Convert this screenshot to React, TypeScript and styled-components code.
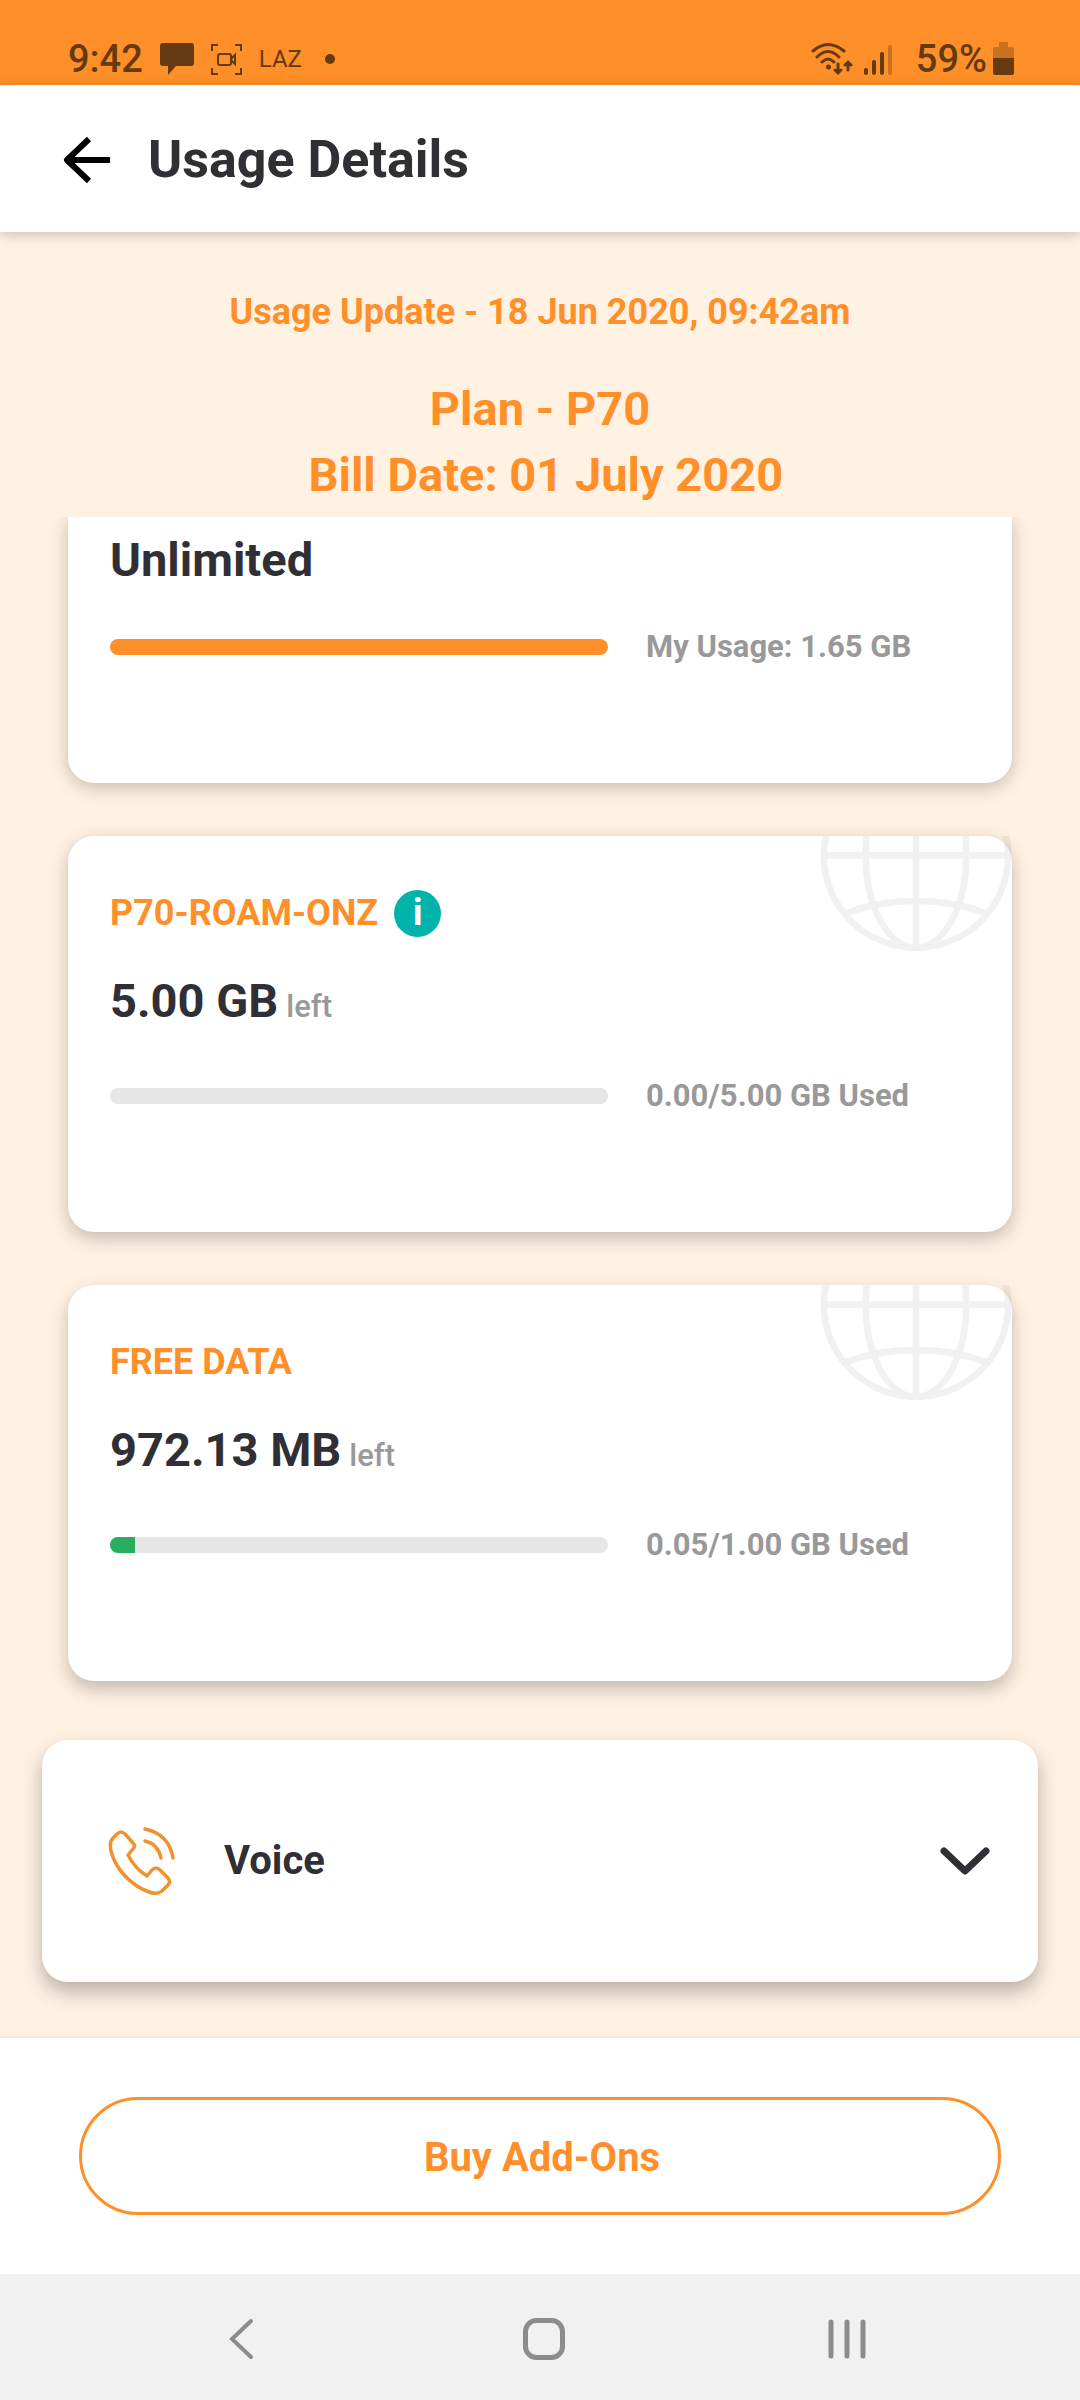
import React from "react";
import styled, { createGlobalStyle } from "styled-components";

const color = {
  orange: "#ff8f28",
  cream: "#fff2e3",
  ink: "#302f35",
  grey: "#999999",
  track: "#e6e6e6",
  teal: "#00b4ab",
  green: "#27ae60",
  status: "#663a10",
};

const GlobalStyle = createGlobalStyle`
  * { box-sizing: border-box; }
  body { margin: 0; background: ${color.cream}; }
  button { font: inherit; color: inherit; border: 0; padding: 0; background: none; cursor: pointer; }
  h1, h2, p { margin: 0; font: inherit; }
  svg { display: block; flex: none; }
`;

const Page = styled.div`
  display: flex;
  flex-direction: column;
  min-height: 100vh;
  background: ${color.cream};
  color: ${color.ink};
  font-family: Roboto, "Liberation Sans", sans-serif;
  font-weight: 700;
`;

/* ---------- status bar ---------- */

const StatusBar = styled.div`
  display: flex;
  justify-content: space-between;
  height: 85px;
  padding: 35px 66px 2px 68px;
  background: ${color.orange};
  color: ${color.status};
`;

const StatusGroup = styled.div<{ $gap: number }>`
  display: flex;
  align-items: center;
  gap: ${(p) => p.$gap}px;
`;

const StatusText = styled.span`
  font-size: 38px;
  line-height: 48px;
  font-weight: 500;
`;

const CarrierTag = styled.span`
  font-size: 24px;
  line-height: 48px;
  font-weight: 400;
`;

const Dot = styled.span`
  width: 10px;
  height: 10px;
  margin-left: 6px;
  border-radius: 50%;
  background: currentColor;
`;

/* ---------- header ---------- */

const Header = styled.header`
  position: relative;
  z-index: 2;
  display: flex;
  align-items: center;
  gap: 37px;
  height: 147px;
  padding: 2px 62px 0;
  background: #fff;
  box-shadow: 0 3px 12px rgba(0, 0, 0, 0.2);
`;

const Title = styled.h1`
  font-size: 52px;
  line-height: 60px;
  font-weight: 700;
`;

/* ---------- summary ---------- */

const Summary = styled.section`
  display: flex;
  flex-direction: column;
  gap: 40px;
  padding: 56px 40px 9px;
  color: ${color.orange};
  text-align: center;
`;

const Updated = styled.p`
  font-size: 36px;
  line-height: 48px;
`;

const Plan = styled.p`
  font-size: 47px;
  line-height: 66px;
`;

/* ---------- usage cards ---------- */

const Scroller = styled.main`
  flex: 1;
  display: flex;
  flex-direction: column;
  gap: 59px;
  padding: 0 42px 56px;
  overflow: hidden;
`;

const CardList = styled.div`
  display: flex;
  flex-direction: column;
  gap: 53px;
  padding: 0 26px;
`;

const Card = styled.section<{ $depth: number; $cut?: boolean }>`
  position: relative;
  display: flex;
  flex-direction: column;
  padding: ${(p) => (p.$cut ? "13px" : "53px")} 0 116px 42px;
  border-radius: ${(p) => (p.$cut ? "0 0 26px 26px" : "26px")};
  background: #fff;
  box-shadow: 0 ${(p) => p.$depth}px 18px rgba(0, 0, 0, 0.24);
`;

const CardLabel = styled.h2`
  display: flex;
  align-items: center;
  gap: 16px;
  height: 48px;
  margin-bottom: 34px;
  color: ${color.orange};
  font-size: 36px;
  line-height: 48px;
`;

const InfoButton = styled.button`
  width: 47px;
  height: 47px;
  border-radius: 50%;
  background: ${color.teal};
  color: #fff;
  line-height: 47px;
`;

const Amount = styled.p<{ $cut?: boolean }>`
  height: 60px;
  margin-bottom: ${(p) => (p.$cut ? 37 : 45)}px;
  font-size: 47px;
  line-height: 60px;
`;

const Left = styled.span`
  margin-left: 8px;
  color: ${color.grey};
  font-size: 31px;
  line-height: 40px;
  font-weight: 500;
`;

const Meter = styled.div`
  display: grid;
  grid-template-columns: 498fr 366fr;
  gap: 38px;
  align-items: center;
  color: ${color.grey};
  font-size: 31px;
  line-height: 40px;
  white-space: nowrap;
`;

const Track = styled.div`
  height: 16px;
  border-radius: 8px;
  background: ${color.track};
  overflow: hidden;
`;

const Fill = styled.div<{ $tone: string }>`
  height: 100%;
  background: ${(p) => p.$tone};
`;

const GlobeClip = styled.div`
  position: absolute;
  top: 0;
  right: 0;
  width: 192px;
  height: 116px;
  overflow: hidden;
`;

const VoiceCard = styled.button`
  display: flex;
  align-items: center;
  height: 242px;
  padding: 0 48px 0 66px;
  border-radius: 26px;
  background: #fff;
  box-shadow: 0 10px 20px rgba(0, 0, 0, 0.28);
  font-size: 40px;
  line-height: 50px;
`;

const VoiceLabel = styled.span`
  flex: 1;
  margin-left: 48px;
  text-align: left;
`;

/* ---------- bottom ---------- */

const Footer = styled.footer`
  position: relative;
  display: flex;
  padding: 59px 79px;
  background: #fff;
  box-shadow: 0 0 4px rgba(0, 0, 0, 0.1);
`;

const BuyButton = styled.button`
  flex: 1;
  height: 118px;
  padding: 4px 0 0 4px;
  border: 3px solid ${color.orange};
  border-radius: 59px;
  color: ${color.orange};
  font-size: 40px;
  line-height: 50px;
`;

const NavBar = styled.nav`
  position: relative;
  display: grid;
  grid-template-columns: repeat(3, 1fr);
  height: 126px;
  padding: 4px 82px 0 90px;
  background: #f1f1f1;
`;

const NavButton = styled.button`
  display: flex;
  align-items: center;
  justify-content: center;
`;

/* ---------- drawings ---------- */

const Globe = () => (
  <svg width="192" height="116" viewBox="0 0 192 116" fill="none" stroke="#000" strokeWidth="6.5" opacity="0.05">
    <circle cx="96" cy="19.5" r="92.2" />
    <ellipse cx="96" cy="19.5" rx="50.3" ry="92.2" />
    <path d="M96 0V112M4 19.500H188M27 77C68 61 124 61 165 77" />
  </svg>
);

const usage = [
  { amount: "Unlimited", used: "My Usage: 1.65 GB", percent: 100, tone: color.orange },
  { label: "P70-ROAM-ONZ", info: true, amount: "5.00 GB", used: "0.00/5.00 GB Used", percent: 0, tone: color.green },
  { label: "FREE DATA", amount: "972.13 MB", used: "0.05/1.00 GB Used", percent: 5, tone: color.green },
];

export default function App() {
  return (
    <Page>
      <GlobalStyle />
      <StatusBar>
        <StatusGroup $gap={17}>
          <StatusText>9:42</StatusText>
          <svg width="34" height="34" viewBox="0 0 34 34" fill="currentColor">
            <path d="M3 1H31Q34 1 34 4V21Q34 24 31 24H16L8 33V24H3Q0 24 0 21V4Q0 1 3 1Z" />
          </svg>
          <svg width="31" height="31" viewBox="0 0 31 31" fill="none" stroke="currentColor" strokeWidth="2">
            <path d="M1 7V1H7M24 1H30V7M30 24V30H24M7 30H1V24" />
            <rect x="7" y="10" width="13" height="11" rx="2" />
            <path d="M20 15L24 11V20L20 16Z" />
          </svg>
          <CarrierTag>LAZ</CarrierTag>
          <Dot />
        </StatusGroup>
        <StatusGroup $gap={6}>
          <svg width="42" height="34" viewBox="0 0 42 34" fill="none" stroke="currentColor" strokeWidth="3" strokeLinecap="round">
            <path d="M2 9Q17 -4 33 9M6 15Q17 4 28 15M11 20Q17 14 23 20" />
            <circle cx="17.500" cy="25" r="2.500" fill="currentColor" stroke="none" />
            <path d="M27 22V31M24 28L27 31L30 28M37 28V20M34 23L37 20L40 23" />
          </svg>
          <svg width="51" height="34" viewBox="0 0 51 34" fill="none" stroke="currentColor" strokeWidth="4" strokeLinecap="round">
            <path d="M7 28V31M15 20V31M23 12V31" />
            <path d="M31 5V31" opacity="0.35" />
          </svg>
          <StatusText>59%</StatusText>
          <svg width="21" height="34" viewBox="0 0 21 34" fill="currentColor">
            <path d="M6 0H15V5H19Q21 5 21 7V16H0V7Q0 5 2 5H6Z" opacity="0.35" />
            <path d="M0 16H21V31Q21 33 19 33H2Q0 33 0 31Z" />
          </svg>
        </StatusGroup>
      </StatusBar>

      <Header>
        <button aria-label="Back">
          <svg width="49" height="48" viewBox="0 0 49 48" fill="none" stroke="#000" strokeWidth="6" strokeLinejoin="round">
            <path d="M27 3L5 24L27 45M5 24H48" />
          </svg>
        </button>
        <Title>Usage Details</Title>
      </Header>

      <Summary>
        <Updated>Usage Update - 18 Jun 2020, 09:42am</Updated>
        <Plan>
          Plan - P70
          <br />
          {"\u00a0"}Bill Date: 01 July 2020
        </Plan>
      </Summary>

      <Scroller>
        <CardList>
          {usage.map((item, i) => (
            <Card key={item.amount} $depth={4 + i * 2} $cut={!item.label}>
              {item.label && (
                <>
                  <GlobeClip>
                    <Globe />
                  </GlobeClip>
                  <CardLabel>
                    {item.label}
                    {item.info && <InfoButton aria-label="Plan information">i</InfoButton>}
                  </CardLabel>
                </>
              )}
              <Amount $cut={!item.label}>
                {item.amount}
                {item.label && <Left>left</Left>}
              </Amount>
              <Meter>
                <Track role="progressbar" aria-label={item.used} aria-valuenow={item.percent}>
                  <Fill $tone={item.tone} style={{ width: `${item.percent}%` }} />
                </Track>
                <span>{item.used}</span>
              </Meter>
            </Card>
          ))}
        </CardList>

        <VoiceCard aria-expanded="false">
          <svg width="68" height="68" viewBox="0 0 68 68" fill="none" stroke="#f0932f" strokeWidth="3.500" strokeLinecap="round" strokeLinejoin="round">
            <path d="M9 7Q13 3 17 7L25 16Q28 19 25 22L20 28C24 36 31 44 39 49L44 43Q48 39 52 43L60 51Q63 55 60 58L54 64Q49 68 41 65C22 58 7 41 3 24Q1 15 5 11Z" />
            <path d="M37 2Q61 7 65 31M37 14Q50 17 53 31" />
          </svg>
          <VoiceLabel>Voice</VoiceLabel>
          <svg width="50" height="28" viewBox="0 0 50 28" fill="none" stroke={color.ink} strokeWidth="7" strokeLinecap="round" strokeLinejoin="round">
            <path d="M4 4L25 24L46 4" />
          </svg>
        </VoiceCard>
      </Scroller>

      <Footer>
        <BuyButton>Buy Add-Ons</BuyButton>
      </Footer>

      <NavBar>
        <NavButton aria-label="Back">
          <svg width="26" height="42" viewBox="0 0 26 42" fill="none" stroke="#8c8c8c" strokeWidth="4" strokeLinecap="round">
            <path d="M23 3L4 21L23 39" />
          </svg>
        </NavButton>
        <NavButton aria-label="Home">
          <svg width="42" height="42" viewBox="0 0 42 42" fill="none" stroke="#8c8c8c" strokeWidth="5">
            <rect x="2.500" y="2.500" width="37" height="37" rx="11" />
          </svg>
        </NavButton>
        <NavButton aria-label="Recent apps">
          <svg width="40" height="42" viewBox="0 0 40 42" stroke="#8c8c8c" strokeWidth="5" strokeLinecap="round">
            <path d="M4 4V38M20 4V38M36 4V38" />
          </svg>
        </NavButton>
      </NavBar>
    </Page>
  );
}
